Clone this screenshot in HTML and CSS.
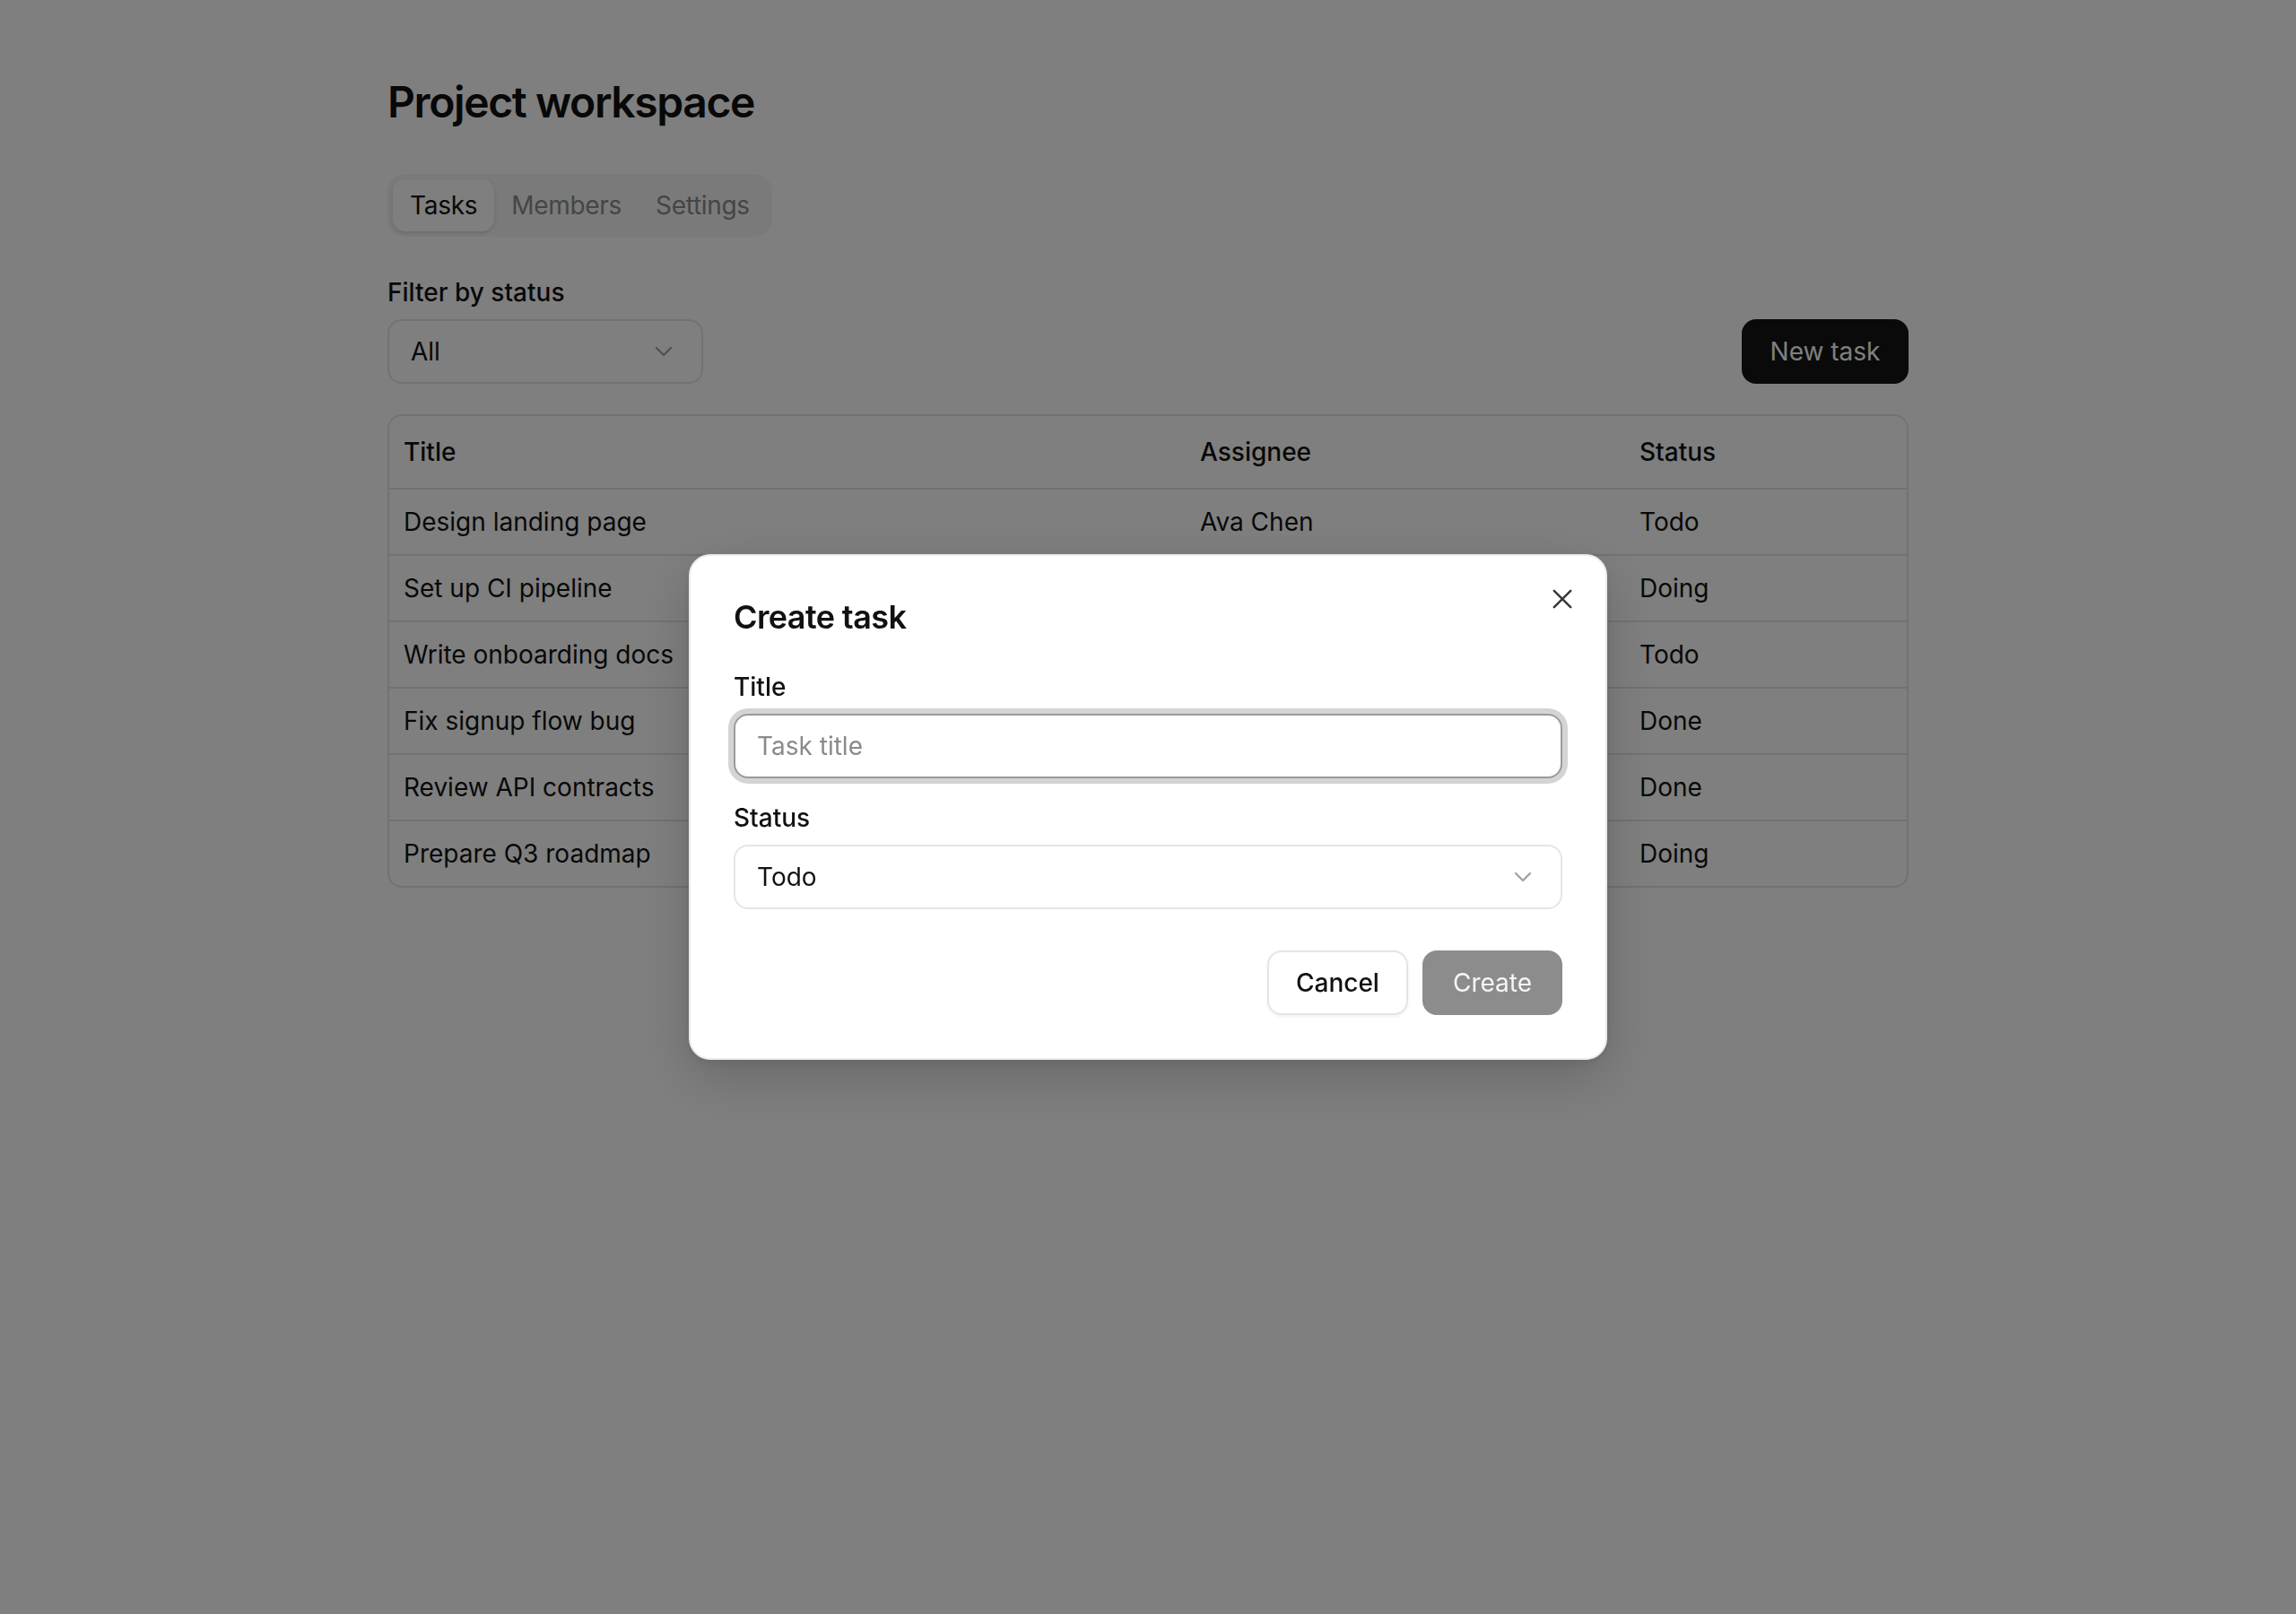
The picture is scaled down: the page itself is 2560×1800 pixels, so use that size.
FILE: index.html
```html
<!DOCTYPE html>
<html lang="en">
<head>
<meta charset="utf-8">
<title>Project workspace</title>
<link rel="stylesheet" href="styles.css">
</head>
<body>
<main class="page">
  <h1 class="page-title">Project workspace</h1>
  <nav class="tabs">
    <span class="tab tab-active">Tasks</span>
    <span class="tab">Members</span>
    <span class="tab">Settings</span>
  </nav>
  <div class="toolbar">
    <div class="filter">
      <div class="filter-label">Filter by status</div>
      <div class="select select-filter">
        <span>All</span>
        <svg class="chev" viewBox="0 0 16 16" width="16" height="16"><path d="M4 6l4 4 4-4" fill="none" stroke="currentColor" stroke-width="1.2" stroke-linecap="round" stroke-linejoin="round"/></svg>
      </div>
    </div>
    <button class="btn btn-dark">New task</button>
  </div>
  <div class="table-wrap">
    <table class="tasks">
      <thead>
        <tr><th class="col-title">Title</th><th class="col-assignee">Assignee</th><th class="col-status">Status</th></tr>
      </thead>
      <tbody>
        <tr><td>Design landing page</td><td>Ava Chen</td><td>Todo</td></tr>
        <tr><td>Set up CI pipeline</td><td>Liam Patel</td><td>Doing</td></tr>
        <tr><td>Write onboarding docs</td><td>Noah Kim</td><td>Todo</td></tr>
        <tr><td>Fix signup flow bug</td><td>Mia Lopez</td><td>Done</td></tr>
        <tr><td>Review API contracts</td><td>Ethan Wong</td><td>Done</td></tr>
        <tr><td>Prepare Q3 roadmap</td><td>Sofia Rossi</td><td>Doing</td></tr>
      </tbody>
    </table>
  </div>
</main>

<div class="overlay">
  <div class="dialog" role="dialog" aria-modal="true">
    <button class="close" aria-label="Close">
      <svg viewBox="0 0 16 16" width="16" height="16"><path d="M3.4 3.4l9.2 9.2M12.6 3.4L3.4 12.6" fill="none" stroke="currentColor" stroke-width="1.3" stroke-linecap="round"/></svg>
    </button>
    <h2 class="dialog-title">Create task</h2>
    <div class="field">
      <label class="field-label">Title</label>
      <input class="input input-focus" type="text" placeholder="Task title">
    </div>
    <div class="field field-second">
      <label class="field-label">Status</label>
      <div class="select select-modal">
        <span>Todo</span>
        <svg class="chev" viewBox="0 0 16 16" width="16" height="16"><path d="M4 6l4 4 4-4" fill="none" stroke="currentColor" stroke-width="1.2" stroke-linecap="round" stroke-linejoin="round"/></svg>
      </div>
    </div>
    <div class="actions">
      <button class="btn btn-outline">Cancel</button>
      <button class="btn btn-disabled">Create</button>
    </div>
  </div>
</div>
</body>
</html>
```

FILE: styles.css
```css
html {
  zoom: 2;
}

* {
  box-sizing: border-box;
}

body {
  margin: 0;
  background: #ffffff;
  color: #111111;
  font-family: Inter, "Liberation Sans", sans-serif;
  font-size: 14px;
  line-height: 20px;
}

.page {
  width: 848px;
  margin: 0 auto;
  padding-top: 41px;
}

.page-title {
  margin: 0;
  font-size: 24px;
  line-height: 32px;
  font-weight: 600;
  letter-spacing: -0.7px;
  color: #111111;
}

.tabs {
  display: inline-flex;
  margin-top: 24px;
  padding: 3px;
  background: #f4f4f4;
  border-radius: 10px;
}

.tab {
  display: flex;
  align-items: center;
  height: 29px;
  padding: 0 9.5px;
  border-radius: 7px;
  font-size: 14px;
  letter-spacing: -0.15px;
  color: #8a8a8a;
}

.tab-active {
  background: #ffffff;
  color: #111111;
  box-shadow: 0 1px 2px rgba(0, 0, 0, 0.12);
}

.toolbar {
  display: flex;
  justify-content: space-between;
  align-items: flex-end;
  margin-top: 21px;
}

.filter-label {
  font-size: 14px;
  line-height: 20px;
  font-weight: 500;
  margin-bottom: 5px;
}

.select {
  display: flex;
  align-items: center;
  justify-content: space-between;
  height: 36px;
  padding: 0 13px 0 12px;
  border: 1px solid #e5e5e5;
  border-radius: 8px;
  background: #ffffff;
  font-size: 14px;
  color: #111111;
}

.select-filter {
  width: 176px;
}

.chev {
  color: #a3a3a3;
  display: block;
}

.btn {
  font-family: inherit;
  font-size: 14px;
  font-weight: 500;
  height: 36px;
  border-radius: 8px;
  padding: 0 15px;
  cursor: pointer;
}

.btn-dark {
  width: 93px;
  padding: 0;
  background: #141414;
  color: #ffffff;
  border: none;
  font-weight: 400;
}

.table-wrap {
  margin-top: 17px;
  border: 1px solid #e5e5e5;
  border-radius: 8px;
  overflow: hidden;
}

.tasks {
  width: 100%;
  border-collapse: collapse;
  table-layout: fixed;
}

.tasks th,
.tasks td {
  text-align: left;
  padding: 8px 8px;
  font-size: 14px;
  line-height: 20px;
  color: #111111;
}

.tasks th {
  padding: 10px 8px;
  font-weight: 500;
}

.tasks td {
  font-weight: 400;
}

.tasks tbody tr td {
  border-top: 1px solid #e5e5e5;
}

.col-title {
  width: 444px;
}

.col-assignee {
  width: 245px;
}

.overlay {
  position: fixed;
  inset: 0;
  background: rgba(0, 0, 0, 0.5);
  display: flex;
  align-items: center;
  justify-content: center;
}

.dialog {
  position: relative;
  width: 512px;
  padding: 24px;
  background: #ffffff;
  border: 1px solid #ececec;
  border-radius: 12px;
  box-shadow: 0 10px 30px rgba(0, 0, 0, 0.18), 0 2px 6px rgba(0, 0, 0, 0.08);
}

.close {
  position: absolute;
  top: 16px;
  right: 16px;
  width: 16px;
  height: 16px;
  padding: 0;
  border: none;
  background: transparent;
  color: #3a3a3a;
  cursor: pointer;
}

.close svg {
  display: block;
}

.dialog-title {
  margin: 0 0 19px;
  font-size: 18px;
  line-height: 20px;
  font-weight: 600;
  letter-spacing: -0.3px;
  color: #111111;
}

.field {
  display: flex;
  flex-direction: column;
  gap: 5px;
}

.field-second {
  margin-top: 12px;
}

.field-label {
  font-size: 14px;
  line-height: 20px;
  font-weight: 500;
  color: #111111;
}

.input {
  width: 100%;
  height: 36px;
  padding: 0 12px;
  border: 1px solid #e5e5e5;
  border-radius: 8px;
  font-family: inherit;
  font-size: 14px;
  color: #111111;
  background: #ffffff;
  outline: none;
}

.input::placeholder {
  color: #8a8a8a;
}

.input-focus {
  border-color: #9a9a9a;
  box-shadow: 0 0 0 3px #d4d4d4;
}

.actions {
  display: flex;
  justify-content: flex-end;
  gap: 8px;
  margin-top: 23px;
}

.btn-outline {
  background: #ffffff;
  color: #111111;
  border: 1px solid #e5e5e5;
  box-shadow: 0 1px 2px rgba(0, 0, 0, 0.06);
}

.btn-disabled {
  background: #8c8c8c;
  color: #f5f5f5;
  border: 1px solid #8c8c8c;
  font-weight: 400;
  padding: 0 16px;
}
```
